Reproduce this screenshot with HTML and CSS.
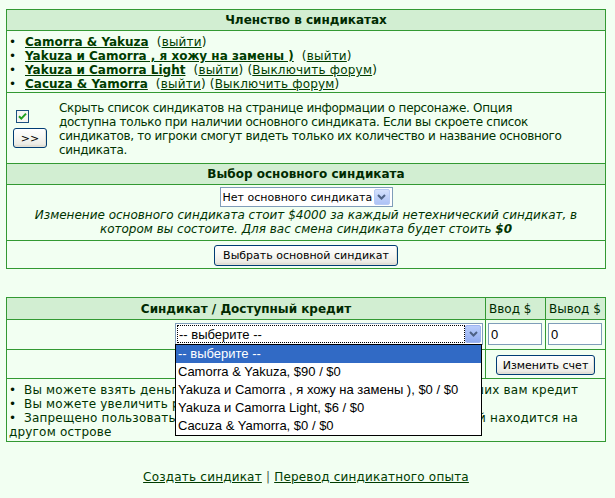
FILE: index.html
```html
<!DOCTYPE html>
<html lang="ru">
<head>
    <meta charset="UTF-8">
    <meta name="viewport" content="width=device-width, initial-scale=1.0">
    <title>Синдикаты</title>
    <link rel="stylesheet" href="styles.css">
</head>
<body>
<div class="page">

    <!-- Membership -->
    <table class="panel">
        <tr><th class="head">Членство в синдикатах</th></tr>
        <tr>
            <td class="list-cell">
                <ul class="member-list">
                    <li><a class="synd" href="#">Camorra &amp; Yakuza</a>&nbsp; (<a href="#">выйти</a>)</li>
                    <li><a class="synd" href="#">Yakuza и Camorra , я хожу на замены )</a>&nbsp; (<a href="#">выйти</a>)</li>
                    <li><a class="synd" href="#">Yakuza и Camorra Light</a>&nbsp; (<a href="#">выйти</a>) (<a href="#">Выключить форум</a>)</li>
                    <li><a class="synd" href="#">Cacuza &amp; Yamorra</a>&nbsp; (<a href="#">выйти</a>) (<a href="#">Выключить форум</a>)</li>
                </ul>
            </td>
        </tr>
        <tr>
            <td class="hide-cell">
                <div class="hide-row">
                    <div class="hide-controls">
                        <span class="xp-check">
                            <svg width="13" height="13" viewBox="0 0 13 13">
                                <rect x="0.5" y="0.5" width="12" height="12" fill="#f6f6f2" stroke="#1c5180"/>
                                <path d="M3 6.2l2.3 2.4 4.7-5" fill="none" stroke="#21a121" stroke-width="2"/>
                            </svg>
                        </span>
                        <button class="xp-btn arrows">&gt;&gt;</button>
                    </div>
                    <p class="hide-text">Скрыть список синдикатов на странице информации о персонаже. Опция<br>доступна только при наличии основного синдиката. Если вы скроете список<br>синдикатов, то игроки смогут видеть только их количество и название основного<br>синдиката.</p>
                </div>
            </td>
        </tr>
        <tr><th class="head">Выбор основного синдиката</th></tr>
        <tr>
            <td class="main-cell">
                <div class="xp-select main-select">
                    <select><option>Нет основного синдиката</option></select>
                    <span class="xp-arrow">
                        <svg width="9" height="6" viewBox="0 0 9 6"><path d="M1 1l3.5 3.5L8 1" fill="none" stroke="#4d6185" stroke-width="2"/></svg>
                    </span>
                </div>
                <p class="price-note">Изменение основного синдиката стоит $4000 за каждый нетехнический синдикат, в котором вы состоите. Для вас смена синдиката будет стоить <b>$0</b></p>
            </td>
        </tr>
        <tr>
            <td class="btn-cell"><button class="xp-btn wide">Выбрать основной синдикат</button></td>
        </tr>
    </table>

    <!-- Credit -->
    <table class="panel credit">
        <colgroup>
            <col>
            <col class="money-col">
            <col class="money-col">
        </colgroup>
        <tr>
            <th class="head">Синдикат / Доступный кредит</th>
            <th class="head plain">Ввод $</th>
            <th class="head plain">Вывод $</th>
        </tr>
        <tr>
            <td class="select-cell">
                <div class="xp-select credit-select">
                    <select><option>-- выберите --</option></select>
                    <span class="xp-arrow hot">
                        <svg width="9" height="6" viewBox="0 0 9 6"><path d="M1 1l3.5 3.5L8 1" fill="none" stroke="#4d6185" stroke-width="2"/></svg>
                    </span>
                    <ul class="dropdown">
                        <li class="selected">-- выберите --</li>
                        <li>Camorra &amp; Yakuza, $90 / $0</li>
                        <li>Yakuza и Camorra , я хожу на замены ), $0 / $0</li>
                        <li>Yakuza и Camorra Light, $6 / $0</li>
                        <li>Cacuza &amp; Yamorra, $0 / $0</li>
                    </ul>
                </div>
            </td>
            <td class="input-cell"><input class="xp-input" type="text" value="0"></td>
            <td class="input-cell"><input class="xp-input" type="text" value="0"></td>
        </tr>
        <tr>
            <td></td>
            <td class="btn-cell account" colspan="2"><button class="xp-btn">Изменить счет</button></td>
        </tr>
        <tr>
            <td class="note-cell" colspan="3">
                <span class="dot">&bull;</span>Вы можете взять деньги только из счетов синдикатов, предоставивших вам кредит<br>
                <span class="dot">&bull;</span>Вы можете увеличить размер кредита, обратившись к синдикату<br>
                <span class="dot">&bull;</span>Запрещено пользоваться кредитом синдиката, если же ваш основной находится на другом острове
            </td>
        </tr>
    </table>

    <p class="footer-links"><a href="#">Создать синдикат</a> | <a href="#">Перевод синдикатного опыта</a></p>

</div>
</body>
</html>
```

FILE: styles.css
```css
/* Reset */
body, p, ul, li {
    margin: 0;
    padding: 0;
}

body {
    background-color: #f2fff2;
    font-family: "DejaVu Sans", Verdana, sans-serif;
    font-size: 12px;
    color: #003300;
}

.page {
    padding: 9px 6px 0;
}

a {
    color: #003c00;
}

/* Panels */
.panel {
    width: 600px;
    border-collapse: collapse;
    letter-spacing: 0.2px;
}

.panel th, .panel td {
    border: 1px solid #339933;
    line-height: 14px;
}

.panel th.head {
    background-color: #d2eed2;
    padding: 3px 4px;
    font-weight: bold;
    letter-spacing: 0;
    color: #002a00;
}

.panel th.plain {
    font-weight: normal;
    text-align: left;
    padding: 4px 0 3px 3px;
    white-space: nowrap;
}

/* Membership list */
.list-cell {
    padding: 4px 2px 1px;
}

.member-list {
    list-style: none;
}

.member-list li::before, .dot {
    content: "\2022";
    display: inline-block;
    width: 16px;
    color: #001a00;
}

.dot {
    width: 15px;
}

.synd {
    font-weight: bold;
    letter-spacing: 0;
}

/* Hide list option */
.hide-cell {
    padding: 8px 2px 6px;
}

.hide-row {
    display: flex;
    align-items: center;
}

.hide-controls {
    width: 50px;
    flex-shrink: 0;
    display: flex;
    flex-direction: column;
    align-items: flex-start;
}

.xp-check {
    display: block;
    height: 13px;
    margin: 0 0 0 7px;
}

.xp-check svg {
    display: block;
}

.hide-text {
    letter-spacing: -0.3px;
    white-space: nowrap;
}

/* Windows XP style controls */
.xp-btn {
    font-family: "DejaVu Sans", Verdana, sans-serif;
    font-size: 11px;
    color: #000;
    height: 20px;
    padding: 0 6px;
    border: 1px solid #003c74;
    border-radius: 3px;
    background: linear-gradient(to bottom, #ffffff 0%, #f7f7f3 45%, #ecebe5 85%, #d6d0c5 100%);
    box-shadow: inset -1px -1px 0 #e3e0d6;
    cursor: pointer;
}

.xp-btn.arrows {
    width: 34px;
    margin: 5px 0 0 4px;
    padding: 0;
}

.xp-btn.wide {
    height: 21px;
    padding: 0 8px;
}

.btn-cell {
    padding: 4px 2px 2px;
}

.btn-cell.account {
    padding: 5px 2px 3px;
}

.btn-cell .xp-btn {
    display: block;
    margin: 0 auto;
}

.xp-select {
    display: flex;
    box-sizing: border-box;
    border: 1px solid #7f9db9;
    background-color: #fff;
    padding: 1px;
    position: relative;
}

.xp-select select {
    appearance: none;
    -webkit-appearance: none;
    border: 0;
    margin: 0;
    padding: 0 1px;
    background: transparent;
    color: #000;
    outline: none;
}

.xp-arrow {
    width: 16px;
    flex-shrink: 0;
    display: flex;
    align-items: center;
    justify-content: center;
    box-sizing: border-box;
    border: 1px solid #b9cbf5;
    border-radius: 2px;
    background: linear-gradient(to bottom, #d5e1fd 0%, #bccdf8 60%, #aec3f6 100%);
}

.xp-arrow.hot {
    border-color: #9db4ef;
    background: linear-gradient(to bottom, #b9cdfb 0%, #a1b9f4 60%, #8fabf0 100%);
}

/* Main syndicate */
.main-cell {
    padding: 2px 2px 4px;
}

.main-select {
    width: 173px;
    height: 20px;
    margin: 0 auto;
}

.main-select select {
    width: 152px;
    font-family: "DejaVu Sans", Verdana, sans-serif;
    font-size: 11px;
}

.price-note {
    margin: 1px 8px 0;
    text-align: center;
    font-style: italic;
    letter-spacing: 0;
}

/* Credit table */
.credit {
    margin-top: 28px;
}

.credit th.head {
    padding-top: 4px;
}

.money-col {
    width: 60px;
}

.select-cell {
    padding: 3px 2px 4px;
}

.credit-select {
    width: 308px;
    height: 22px;
    margin-left: auto;
}

.credit-select select {
    width: 288px;
    font-family: "Liberation Sans", Arial, sans-serif;
    font-size: 13px;
    border: 1px dotted #000;
}

.dropdown {
    position: absolute;
    top: 100%;
    left: -1px;
    width: 307px;
    box-sizing: border-box;
    border: 1px solid #000;
    background-color: #fff;
    list-style: none;
    font-family: "Liberation Sans", Arial, sans-serif;
    font-size: 13px;
    letter-spacing: 0;
    color: #000;
    text-align: left;
    z-index: 10;
}

.dropdown li {
    height: 18px;
    line-height: 18px;
    padding-left: 2px;
    white-space: nowrap;
}

.dropdown li.selected {
    background-color: #316ac5;
    color: #fff;
}

.input-cell {
    padding: 3px 2px 4px;
}

.xp-input {
    display: block;
    box-sizing: border-box;
    width: 54px;
    height: 22px;
    border: 1px solid #7f9db9;
    padding: 0 2px;
    font-family: "Liberation Sans", Arial, sans-serif;
    font-size: 13px;
    color: #000;
}

.note-cell {
    padding: 4px 2px 2px;
}

/* Footer */
.footer-links {
    width: 600px;
    margin-top: 28px;
    text-align: center;
    letter-spacing: 0.2px;
    color: #446644;
}
```
